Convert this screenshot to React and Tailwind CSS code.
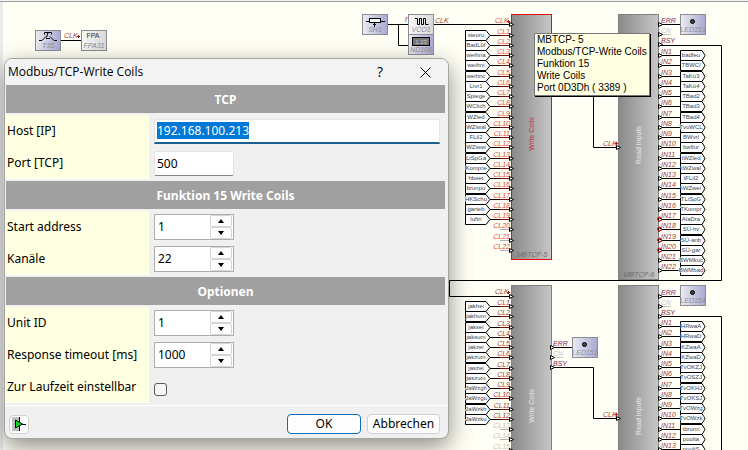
import { useEffect, useRef, useState } from 'react'

const coilsTop = [
  'steoru', 'BadLüf', 'weihna', 'weihni', 'weihnc', 'Livr1', 'Spiege', 'WClich', 'WZled', 'WZiwal',
  'FLil2', 'WZiwei', 'LiSpGa', 'Kompre', 'hbeet', 'brunpu', 'HKSchu', 'garteb', 'luftri', null, null, null,
]

const coilsBottom = [
  'jakhei', 'jakhum', 'jaksei', 'jaksum', 'jakzei', 'jakzum', 'jaszei', 'jaszum',
  'JaWzgh', 'JaWzgu', 'JaWzkh', 'JaWzku', null, null, null,
]

const inputsTop = [
  'badfeu', 'TBWCl', 'TaKü3', 'TaKü4', 'TBad2', 'TBad3', 'TBad4', 'TvoWCL', 'BWvrl', 'bwflur', 'tWZled',
  'tWZwal', 'tFLil2', 'tWZwei', 'TLiSpG', 'TKompr', 'AlaDra', 'SÜ-hv', 'SÜ-anb', 'SÜ-gar', 'BWMküc', 'BWMbad',
]

const inputsBottom = [
  'HRwaA', 'HRwaD', 'KZwaA', 'KZwaD', 'TvOKZJ', 'TvOSZJ', 'TvOKHJ', 'TvOKSJ', 'TvOWzg', 'TvOWzk',
  'tbrunn', 'poolta', 'pooltS',
]

const PITCH = 10.25

const pinY = (first, i) => Math.round(first + i * PITCH)

function PinArrow({ x, y }) {
  return <path d={`M${x} ${y - 2}v4l4 -2z`} fill="#fffff5" stroke="#000" />
}

function PinLabel({ x, y, anchor = 'start', color = '#9a3c46', children }) {
  return (
    <text x={x} y={y} textAnchor={anchor} fill={color} className="text-[7px] italic">
      {children}
    </text>
  )
}

// white halo, so long names break the outline of the flag
function FlagName({ x, y, children }) {
  return (
    <text
      x={x}
      y={y}
      textAnchor="middle"
      fill="#3c4650"
      stroke="#fff"
      strokeWidth="1"
      paintOrder="stroke"
      className="text-[6px]"
    >
      {children}
    </text>
  )
}

function CoilPins({ first, names, color, unusedColor }) {
  return names.map((name, i) => {
    const y = pinY(first, i)
    return (
      <g key={i}>
        {name ? (
          <>
            <path d={`M465.5 ${y - 4.5}H486l4 5l-4 5H465.5z`} fill="#fff" stroke="#000" />
            <path d={`M490 ${y + 0.5}h10`} stroke="#000" />
            <path d={`M500 ${y + 0.5}h9`} stroke="#7a1414" />
            <FlagName x={476} y={y + 2}>{name}</FlagName>
          </>
        ) : (
          <path d={`M500 ${y + 0.5}h9`} stroke="#b0b0b0" />
        )}
        <PinLabel x={510} y={y - 1} anchor="end" color={name ? color : unusedColor}>{`CL${i + 1}`}</PinLabel>
        <PinArrow x={509.5} y={y + 0.5} />
      </g>
    )
  })
}

function InputPins({ first, names, inverted = [] }) {
  return names.map((name, i) => {
    const y = pinY(first, i)
    return (
      <g key={i}>
        <path d={`M680.5 ${y - 4.5}H702l3 5l-3 5H680.5z`} fill="#fff" stroke="#000" />
        <path d={`M662 ${y + 0.5}h18`} stroke="#000" />
        <FlagName x={691} y={y + 2}>{name}</FlagName>
        <PinLabel x={661} y={y - 1}>{`IN${i + 1}`}</PinLabel>
        <PinArrow x={658.5} y={y + 0.5} />
        {inverted.includes(i + 1) && <circle cx="659.5" cy={y} r="2" fill="none" stroke="#e01818" />}
      </g>
    )
  })
}

function StatusPins({ x, y }) {
  return (
    <g>
      <PinLabel x={x + 2} y={y - 1} color="#8a2850">ERR</PinLabel>
      <path d={`M${x} ${y + 0.5}h21`} stroke="#000" />
      <PinArrow x={x - 0.5} y={y + 0.5} />
      <PinLabel x={x + 2} y={y + 9} color="#c4c4c4">CN</PinLabel>
      <path d={`M${x + 4} ${y + 10.5}h8`} stroke="#c4c4c4" />
      <PinArrow x={x - 0.5} y={y + 10.5} />
      <PinLabel x={x + 2} y={y + 19} color="#8a2850">BSY</PinLabel>
      <PinArrow x={x - 0.5} y={y + 20.5} />
    </g>
  )
}

function Block({ x, y, height, title, titleY, titleColor, border, name }) {
  return (
    <g>
      <rect x={x} y={y} width="41" height={height + 1} fill={border} />
      <rect x={x + 1} y={y + 1} width="39" height={height - 1} fill="url(#metal)" />
      <text
        transform={`translate(${x + 23} ${titleY}) rotate(-90)`}
        textAnchor="middle"
        fill={titleColor}
        className="text-[7px]"
      >
        {title}
      </text>
      {name && (
        <text x={x + 21} y={y + height - 2} textAnchor="middle" fill="#6e6e6e" className="text-[7px] italic">
          {name}
        </text>
      )}
    </g>
  )
}

function Chip({ x, y, name, fill = 'url(#lilac)', children }) {
  return (
    <g>
      <rect x={x + 0.5} y={y + 0.5} width="25" height="20" fill={fill} stroke="#8c8c94" />
      <text x={x + 13} y={y + 18} textAnchor="middle" fill="#8c8c94" className="text-[7px] italic">{name}</text>
      {children}
    </g>
  )
}

function Led({ x, y, name }) {
  return (
    <Chip x={x} y={y} name={name}>
      <circle cx={x + 12.5} cy={y + 7.5} r="2" fill="#444" stroke="#000" />
    </Chip>
  )
}

function Schematic() {
  return (
    <svg className="block h-full w-full font-['Liberation_Sans',sans-serif]" aria-label="Schaltplan">
      <defs>
        <linearGradient id="metal">
          <stop offset="0" stopColor="#8a8a8a" />
          <stop offset="1" stopColor="#c6c6c6" />
        </linearGradient>
        <linearGradient id="lilac">
          <stop offset="0" stopColor="#ececf0" />
          <stop offset="1" stopColor="#a8a8d4" />
        </linearGradient>
        <linearGradient id="light">
          <stop offset="0" stopColor="#f8f8f8" />
          <stop offset="1" stopColor="#d8d8dc" />
        </linearGradient>
      </defs>

      {/* timer into the front panel */}
      <path d="M61 40.5H81" stroke="#000" />
      <PinLabel x={64} y={38}>CLK</PinLabel>
      <path d="M77 36.5h3M78.5 35v3" stroke="#8a1414" />
      <Chip x={35} y={30} name="T35">
        <path
          d="M39 40.5h3l4 -4M57 40.5h-3l-4 -4M44.5 34.5v-2h7v2M48 32.5l-1.5 5M46 38.5h4"
          fill="none"
          stroke="#000"
        />
      </Chip>
      <Chip x={81} y={30} name="FPA31" fill="url(#light)">
        <text x="93" y="38" textAnchor="middle" fill="#333" className="text-[7px]">FPA</text>
      </Chip>

      {/* oscillator */}
      <path d="M388 24.5H408M398.5 24V45.5H408M434 24.5H511" fill="none" stroke="#000" />
      <PinLabel x={405} y={22}>f</PinLabel>
      <PinLabel x={435} y={23}>CLK</PinLabel>
      <Chip x={362} y={14} name="SH1">
        <path d="M366 21.5h3M380 21.5h5M374.5 23v4M373 24.5h3" stroke="#000" />
        <rect x="369.5" y="18.5" width="11" height="4" fill="#fff" stroke="#000" />
      </Chip>
      <Chip x={408} y={14} name="VCO1" fill="url(#light)">
        <path d="M415 18.5h2.5v6h2v-6h2v6h2v-6h2v6h3" fill="none" stroke="#000" />
      </Chip>
      <Chip x={408} y={34} name="ND106">
        <rect x="412.5" y="37.5" width="17" height="8" fill="#777" stroke="#000" />
        <text x="421" y="44" textAnchor="middle" fill="#c8c8c8" className="text-[6px]">1.23</text>
      </Chip>

      {/* wires between the Modbus blocks */}
      <path
        d="M659 45.5H721.5V280.5H449.5V296.5H511M552 45.5H593.5V147.5H618M552 367.5H593.5V418.5H618M659 316.5H721.5V450"
        fill="none"
        stroke="#000"
      />

      <Block x={511} y={14} height={245} title="Write Coils" titleY={134} titleColor="#c83232" border="#e80c0c" name="MBTCP-5" />
      <PinLabel x={495} y={23} color="#e04a48">CLK</PinLabel>
      <path d="M507 21.5h3M508.5 20v3" stroke="#c01818" />
      <PinArrow x={509.5} y={24.5} />
      <CoilPins first={34.5} names={coilsTop} color="#e04a48" unusedColor="#e04a48" />

      <Block x={618} y={14} height={265} title="Read Inputs" titleY={145} titleColor="#e8e8e8" border="#808080" name="MBTCP-6" />
      <PinLabel x={603} y={146}>CLK</PinLabel>
      <path d="M615 143.5h3M616.5 142v3" stroke="#c01818" />
      <PinArrow x={616.5} y={147.5} />
      <StatusPins x={659} y={24} />
      <InputPins first={55} names={inputsTop} inverted={[17, 18, 19, 20]} />
      <Led x={680} y={14} name="LED153" />

      <Block x={511} y={285} height={200} title="Write Coils" titleY={406} titleColor="#e8e8e8" border="#808080" />
      <PinLabel x={495} y={294}>CLK</PinLabel>
      <path d="M507 292.5h3M508.5 291v3" stroke="#8a1414" />
      <PinArrow x={509.5} y={296.5} />
      <CoilPins first={306} names={coilsBottom} color="#9a3c46" unusedColor="#c0c0c0" />
      <StatusPins x={551} y={347} />
      <Led x={572} y={337} name="LED151" />

      <Block x={618} y={285} height={200} title="Read Inputs" titleY={416} titleColor="#e8e8e8" border="#808080" />
      <PinLabel x={603} y={417}>CLK</PinLabel>
      <path d="M615 414.5h3M616.5 413v3" stroke="#c01818" />
      <PinArrow x={616.5} y={418.5} />
      <StatusPins x={659} y={296} />
      <InputPins first={326} names={inputsBottom} />
      <Led x={680} y={285} name="LED154" />
    </svg>
  )
}

function Section({ title, children }) {
  return (
    <section>
      <h2 className="mr-[3px] ml-px h-7 bg-[#a0a0a0] pt-px text-center leading-7 font-bold text-white">{title}</h2>
      <div className="py-0.5">{children}</div>
    </section>
  )
}

function Row({ label, id, children }) {
  return (
    <div className="flex h-8 items-center">
      <label htmlFor={id} className="flex h-full w-36 items-center bg-[#ffffe1] pl-0.5 whitespace-nowrap">
        {label}
      </label>
      <div className="flex-1 pr-2 pl-[5px]">{children}</div>
    </div>
  )
}

function Spinner({ id, initial }) {
  const [value, setValue] = useState(initial)
  const button = 'flex h-3 w-[22px] items-center justify-center rounded-xs border border-[#d4d4d4] bg-[#fcfcfc]'

  return (
    <div className="flex h-[26px] w-20 items-center border border-[#ababb0] bg-white pr-px">
      <input
        id={id}
        inputMode="numeric"
        value={value}
        onChange={(e) => setValue(Number(e.target.value) || 0)}
        className="w-full min-w-0 pl-[3px] outline-none"
      />
      <div className="flex flex-col">
        <button type="button" aria-label="Erhöhen" className={button} onClick={() => setValue(value + 1)}>
          <svg width="6" height="4"><path d="M0 4L3 0L6 4z" /></svg>
        </button>
        <button type="button" aria-label="Verringern" className={button} onClick={() => setValue(value - 1)}>
          <svg width="6" height="4"><path d="M0 0L3 4L6 0z" /></svg>
        </button>
      </div>
    </div>
  )
}

function CoilsDialog() {
  const host = useRef(null)

  useEffect(() => {
    host.current.focus()
    host.current.select()
  }, [])

  return (
    <form
      role="dialog"
      aria-labelledby="dialog-title"
      className="absolute top-[58px] left-1 w-[445px] overflow-hidden rounded-lg border border-[#a4a4a0] bg-[#f0f0f0] text-xs text-black shadow-[0_8px_24px_rgba(0,0,0,0.45)] font-['Noto_Sans',sans-serif]"
      onSubmit={(e) => e.preventDefault()}
    >
      <header className="flex h-[26px] items-center bg-[#f3f3f3] pl-[3px] font-['Open_Sans',sans-serif]">
        <h1 id="dialog-title" className="flex-1">Modbus/TCP-Write Coils</h1>
        <button type="button" aria-label="Hilfe" className="w-11 text-sm">?</button>
        <button type="button" aria-label="Schließen" className="flex w-[46px] justify-center">
          <svg width="11" height="11" stroke="#000" fill="none"><path d="M0.5 0.5l10 10M10.5 0.5l-10 10" /></svg>
        </button>
      </header>

      <Section title="TCP">
        <Row label="Host [IP]" id="host">
          <input
            id="host"
            ref={host}
            defaultValue="192.168.100.213"
            className="block h-[25px] w-full border border-b-2 border-[#e4e4e4] border-b-[#1a6090] bg-white pl-0.5 outline-none selection:bg-[#0078d7] selection:text-white"
          />
        </Row>
        <Row label="Port [TCP]" id="port">
          <input
            id="port"
            defaultValue="500"
            className="block h-[25px] w-20 rounded-xs border border-[#e4e4e4] border-b-[#868686] bg-white pl-0.5 outline-none"
          />
        </Row>
      </Section>

      <Section title="Funktion 15 Write Coils">
        <Row label="Start address" id="start"><Spinner id="start" initial={1} /></Row>
        <Row label="Kanäle" id="channels"><Spinner id="channels" initial={22} /></Row>
      </Section>

      <Section title="Optionen">
        <Row label="Unit ID" id="unit"><Spinner id="unit" initial={1} /></Row>
        <Row label="Response timeout [ms]" id="timeout"><Spinner id="timeout" initial={1000} /></Row>
        <Row label="Zur Laufzeit einstellbar" id="runtime">
          <input
            id="runtime"
            type="checkbox"
            className="mt-1 block size-[13px] appearance-none rounded-[3px] border border-[#5c5c5c] bg-[#f6f6f6]"
          />
        </Row>
      </Section>

      <footer className="flex h-[33px] items-center gap-1.5 border-t border-white pt-1 pr-2 pl-1">
        <button
          type="button"
          aria-label="Ausgang"
          className="mr-auto flex h-[19px] w-5 items-center justify-center rounded-sm border border-[#d0d0d0] bg-white"
        >
          <svg width="14" height="14">
            <rect width="7" height="14" fill="#c0c0c0" />
            <path d="M7.5 0v14M10 7.5h4" stroke="#000" />
            <path d="M3.5 3v8l7 -4z" fill="#10d820" stroke="#000" />
          </svg>
        </button>
        <button type="submit" className="h-5 w-[74px] rounded-sm border border-[#0a6cbc] bg-[#fdfdfd] leading-4">OK</button>
        <button type="button" className="h-5 w-[73px] rounded-sm border border-[#d0d0d0] bg-[#fdfdfd] leading-4">
          Abbrechen
        </button>
      </footer>
    </form>
  )
}

export default function App() {
  return (
    <main className="relative h-screen overflow-hidden bg-linear-to-r from-[#ececec] from-[3px] to-[#fffff5] to-[3px]">
      <Schematic />
      <div className="absolute inset-x-0 top-0 h-0.5 border-b border-[#9c9c9c] bg-[#f4f4f4]" />

      <div
        role="tooltip"
        className="absolute top-[33px] left-[534px] border border-[#767676] bg-[#ffffe1] px-0.5 pb-px text-[10px] leading-3 whitespace-nowrap text-black shadow-[1px_1px_0_#000] font-['Liberation_Sans',sans-serif]"
      >
        <p>MBTCP- 5</p>
        <p>Modbus/TCP-Write Coils</p>
        <p>Funktion 15</p>
        <p>Write Coils</p>
        <p>Port 0D3Dh ( 3389 )</p>
      </div>

      <CoilsDialog />
    </main>
  )
}
